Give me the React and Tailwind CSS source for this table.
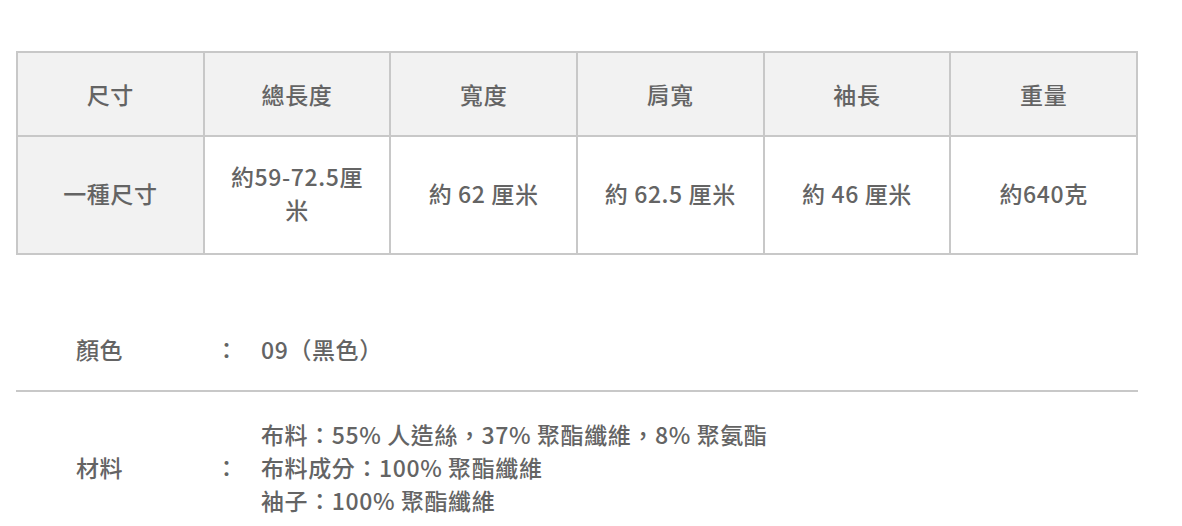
const HEAD = ["尺寸", "總長度", "寬度", "肩寬", "袖長", "重量"];
const BODY = ["約59-72.5厘米", "約 62 厘米", "約 62.5 厘米", "約 46 厘米", "約640克"];

const MATERIALS = [
  "布料：55% 人造絲，37% 聚酯纖維，8% 聚氨酯",
  "布料成分：100% 聚酯纖維",
  "袖子：100% 聚酯纖維",
];

export default function App() {
  return (
    <div className="min-h-screen bg-white font-['Noto_Sans_CJK_TC','Noto_Sans',sans-serif] text-[23px] leading-[33px] tracking-[0.6px] font-medium text-[#646464]">
      <div className="ml-4 w-[1122px] pt-[51px]">
        <table className="w-full table-fixed border-collapse text-center">
          <thead>
            <tr className="h-[84px] bg-[#f2f2f2]">
              {HEAD.map((h) => (
                <th key={h} className="border-2 border-[#c8c8c8] px-5 font-medium">
                  {h}
                </th>
              ))}
            </tr>
          </thead>
          <tbody>
            <tr className="h-[118px]">
              <th className="border-2 border-[#c8c8c8] bg-[#f2f2f2] px-5 pb-1 font-medium">一種尺寸</th>
              {BODY.map((v) => (
                <td key={v} className="border-2 border-[#c8c8c8] px-5 pb-1">
                  {v}
                </td>
              ))}
            </tr>
          </tbody>
        </table>

        <dl className="mt-[56px]">
          <div className="flex items-center border-b-2 border-[#c8c8c8] pt-[22px] pb-[24px] pl-[60px]">
            <dt className="w-[139px]">顏色</dt>
            <span className="w-[46px]">：</span>
            <dd>09（黑色）</dd>
          </div>
          <div className="flex items-center pt-[26px] pl-[60px]">
            <dt className="w-[139px]">材料</dt>
            <span className="w-[46px]">：</span>
            <dd>
              {MATERIALS.map((m) => (
                <div key={m}>{m}</div>
              ))}
            </dd>
          </div>
        </dl>
      </div>
    </div>
  );
}
